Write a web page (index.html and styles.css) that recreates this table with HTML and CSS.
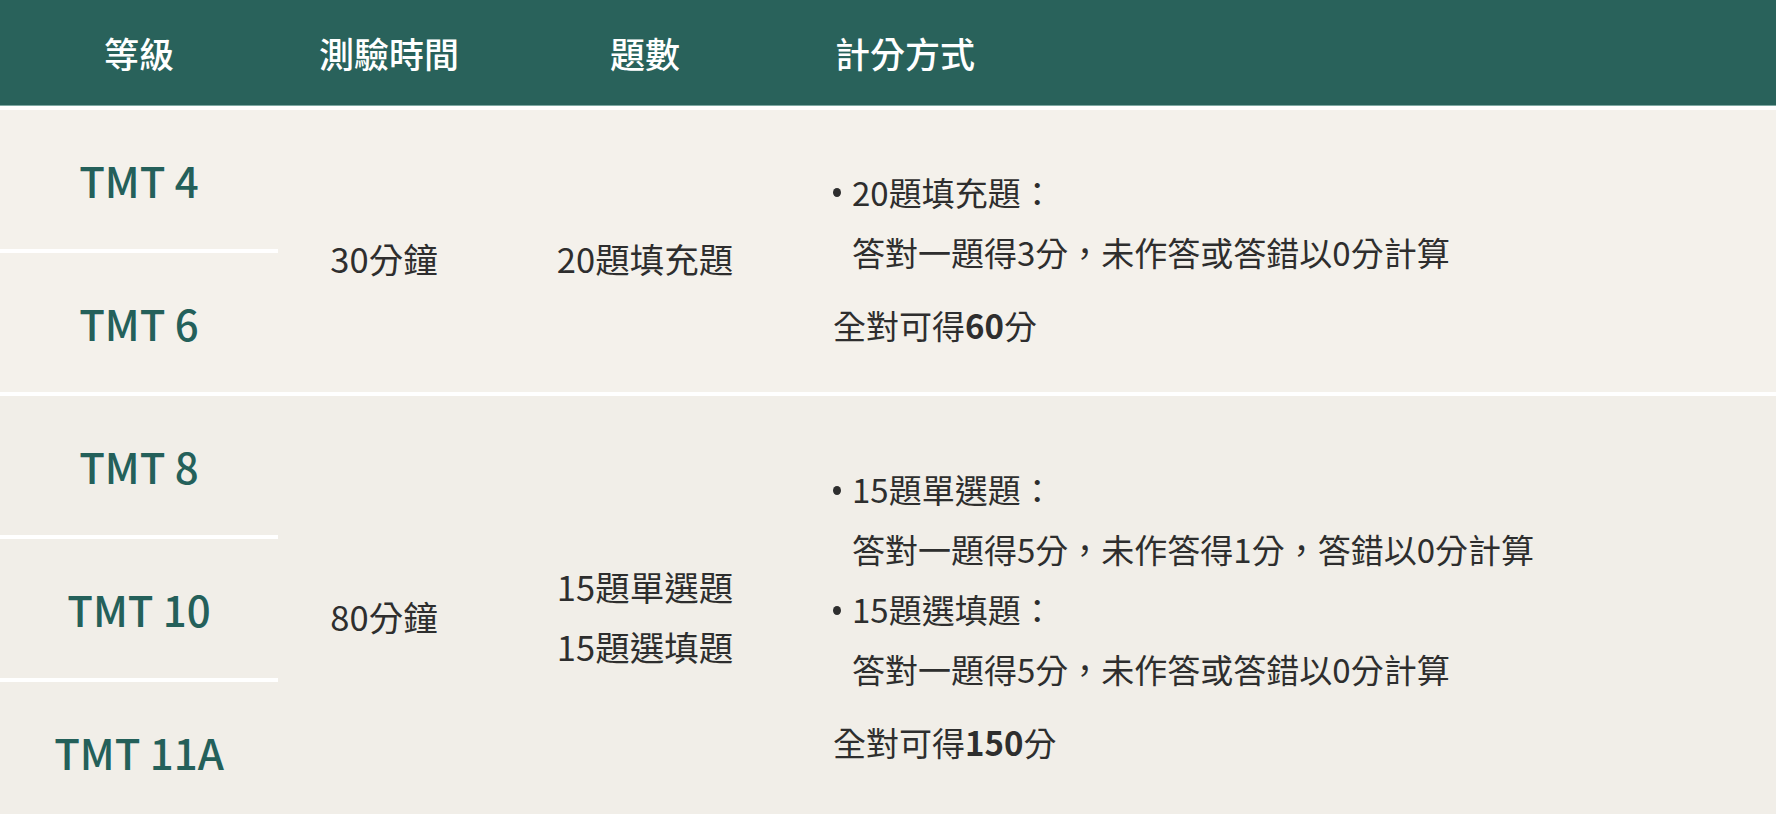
FILE: index.html
```html
<!DOCTYPE html>
<html lang="zh-Hant">
<head>
<meta charset="utf-8">
<title>TMT 測驗計分方式</title>
<link rel="stylesheet" href="styles.css">
</head>
<body>
<div class="table">
  <div class="head">
    <div class="hcell c1">等級</div>
    <div class="hcell c2">測驗時間</div>
    <div class="hcell c3">題數</div>
    <div class="hcell c4">計分方式</div>
  </div>

  <div class="group g1 rows2">
    <div class="level">TMT 4</div>
    <div class="level">TMT 6</div>
    <div class="span mid time">30分鐘</div>
    <div class="span mid count"><p>20題填充題</p></div>
    <div class="span score">
      <ul class="items">
        <li><span class="dot"></span><div><p>20題填充題：</p><p>答對一題得3分，未作答或答錯以0分計算</p></div></li>
      </ul>
      <p class="total">全對可得<b>60</b>分</p>
    </div>
  </div>

  <div class="group g2 rows3">
    <div class="level">TMT 8</div>
    <div class="level">TMT 10</div>
    <div class="level">TMT 11A</div>
    <div class="span mid time">80分鐘</div>
    <div class="span mid count"><p>15題單選題</p><p>15題選填題</p></div>
    <div class="span score">
      <ul class="items">
        <li><span class="dot"></span><div><p>15題單選題：</p><p>答對一題得5分，未作答得1分，答錯以0分計算</p></div></li>
        <li><span class="dot"></span><div><p>15題選填題：</p><p>答對一題得5分，未作答或答錯以0分計算</p></div></li>
      </ul>
      <p class="total">全對可得<b>150</b>分</p>
    </div>
  </div>
</div>
</body>
</html>
```

FILE: styles.css
```css
html, body {
  margin: 0;
  padding: 0;
  background: #ffffff;
}
body {
  font-family: "Noto Sans CJK TC", "Noto Sans", sans-serif;
  color: #2e2e2e;
  overflow: hidden;
}
p { margin: 0; }

.table {
  display: flex;
  flex-direction: column;
  gap: 4px;
}

.head {
  display: grid;
  grid-template-columns: 278px 222px 290px 1fr;
  height: 105px;
  background: #29625b;
  border-bottom: 1px solid #7fa9a3;
  align-items: center;
  color: #ffffff;
  font-size: 35px;
  font-weight: 500;
}
.hcell { text-align: center; }
.hcell.c4 { text-align: left; padding-left: 45px; }

.group {
  display: grid;
  grid-template-columns: 278px 222px 290px 1fr;
  row-gap: 4px;
}
.g1 { --bg: #f4f1eb; }
.g2 { --bg: #f1eee8; }
.rows2 { grid-template-rows: 139px 139px; }
.rows3 { grid-template-rows: 139px 139px 139px; }

.level {
  grid-column: 1;
  background: var(--bg);
  display: flex;
  align-items: center;
  justify-content: center;
  color: #24605a;
  font-size: 42px;
  font-weight: 500;
}
.span {
  grid-row: 1 / -1;
  background: var(--bg);
  display: flex;
  flex-direction: column;
  justify-content: center;
  padding-top: 14px;
  font-size: 33px;
  line-height: 60px;
}
.mid { font-size: 34.5px; }
.time { grid-column: 2; align-items: center; padding-right: 10px; }
.count { grid-column: 3; align-items: center; }
.score { grid-column: 4; padding-left: 43px; }

.items {
  list-style: none;
  margin: 0 0 13px;
  padding: 0;
}
.items li {
  display: flex;
}
.dot {
  flex: none;
  width: 19px;
  height: 60px;
  display: flex;
  align-items: center;
}
.dot::after {
  content: "";
  width: 8px;
  height: 9px;
  border-radius: 50%;
  background: #2e2e2e;
  margin-top: 2px;
}
.total b { font-weight: 700; }
```
